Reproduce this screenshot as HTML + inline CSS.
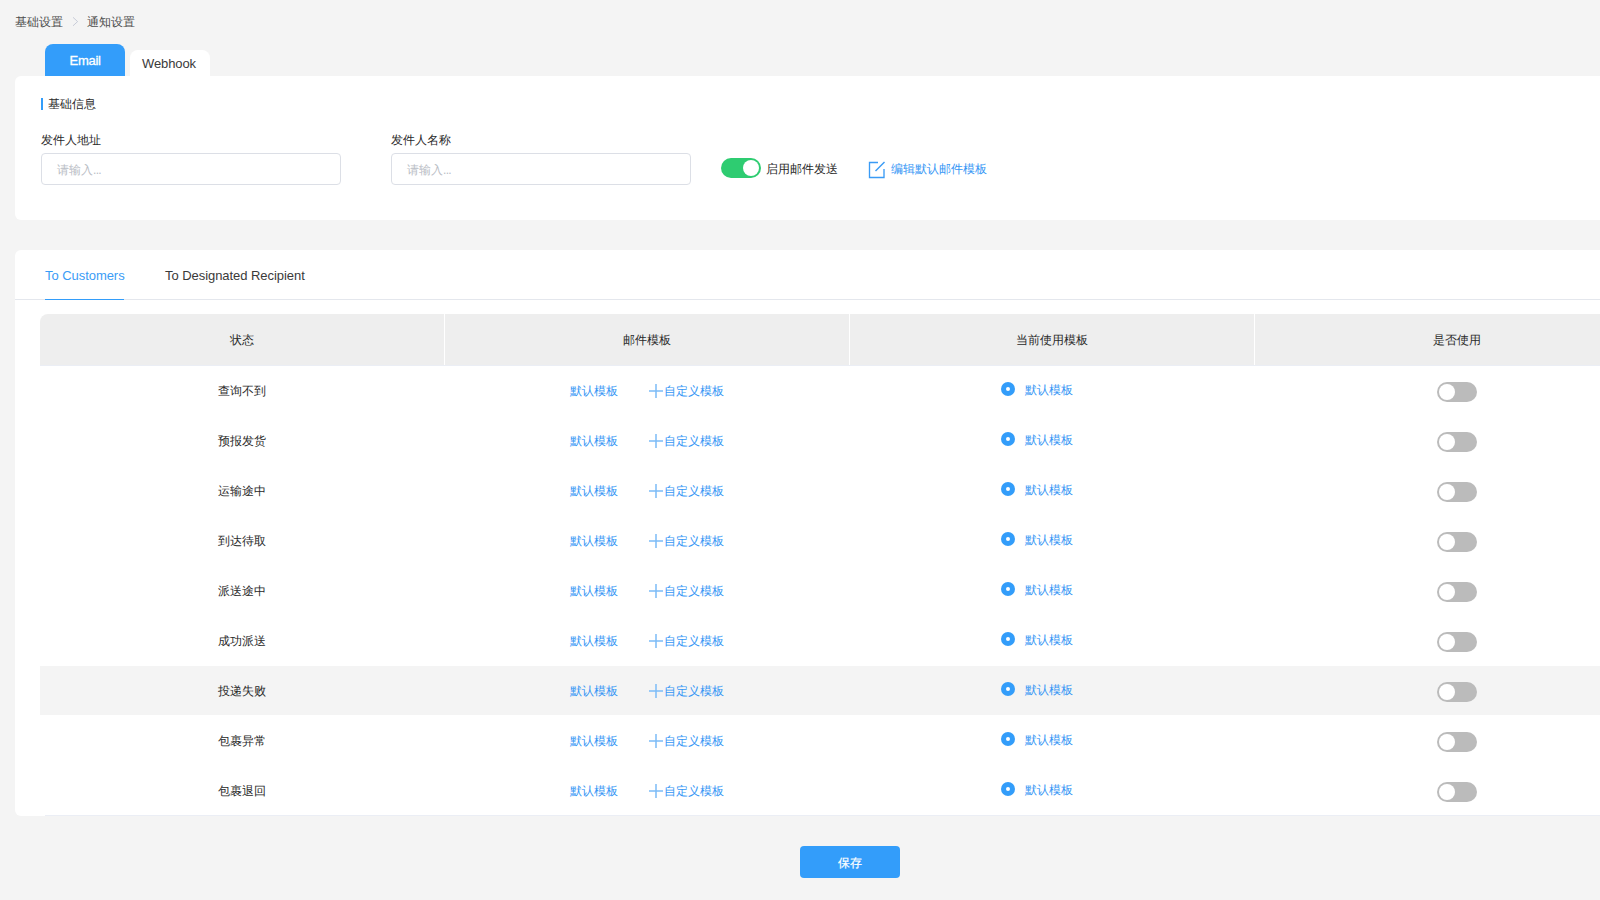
<!DOCTYPE html>
<html><head><meta charset="utf-8">
<style>
*{box-sizing:border-box;margin:0;padding:0}
html,body{width:1600px;height:900px;overflow:hidden;background:#f4f4f4;font-family:"Liberation Sans",sans-serif;color:#2a2a2a;font-size:12px}
.abs{position:absolute}
.t{position:absolute;white-space:nowrap;line-height:1}
.blue{color:#3596f5}
.crumb{color:#4d4d4d}
.tab-email{left:45px;top:44px;width:80px;height:32px;background:#339dfa;border-radius:8px 8px 0 0}
.tab-web{left:130px;top:50px;width:80px;height:26px;background:#fff;border-radius:8px 8px 0 0}
.card1{left:15px;top:76px;width:1700px;height:144px;background:#fff;border-radius:6px}
.card2{left:15px;top:250px;width:1700px;height:566px;background:#fff;border-radius:6px}
.bar{left:41px;top:98px;width:2px;height:12px;background:#339dfa}
.inp{height:32px;width:300px;top:153px;border:1px solid #dcdfe6;border-radius:4px;background:#fff}
.ph{color:#b9bdc5}
.sw{width:40px;height:20px;border-radius:10px}
.sw .k{position:absolute;top:2px;width:16px;height:16px;border-radius:50%;background:#fff}
.tline{left:15px;top:299px;width:1700px;height:1px;background:#e4e7ed}
.uline{left:45px;top:299px;width:79px;height:1px;background:#339dfa}
.thead{left:40px;top:314px;width:1620px;height:52px;background:#eeeeee;border-radius:8px 0 0 0;border-bottom:1px solid #ebeef5}
.vdiv{top:314px;width:1px;height:51px;background:#fff}
.hover{left:40px;top:666px;width:1620px;height:49px;background:#f4f4f4}
.bline{left:45px;top:815px;width:1620px;height:1px;background:#ebeef5}
.radio{width:14px;height:14px;border-radius:50%;background:#339dfa}
.radio::after{content:"";position:absolute;left:5px;top:5px;width:4px;height:4px;border-radius:50%;background:#fff}
.btn{left:800px;top:846px;width:100px;height:32px;background:#339dfa;border-radius:4px}
</style></head><body>
<div class="t crumb" style="left:15px;top:16px;font-size:12px">基础设置</div>
<svg class="abs" style="left:71px;top:16px" width="9" height="11" viewBox="0 0 9 11"><path d="M2 1.3 L6.6 5.6 L2 9.8" fill="none" stroke="#bcc2d0" stroke-width="0.8"/></svg>
<div class="t crumb" style="left:87px;top:16px;font-size:12px">通知设置</div>

<div class="abs tab-email"></div>
<div class="t" style="left:69.5px;top:54px;font-size:13px;color:#fff;letter-spacing:-0.25px;-webkit-text-stroke:0.3px #fff">Email</div>
<div class="abs tab-web"></div>
<div class="t" style="left:142px;top:57px;font-size:13px;color:#3a3a3a;letter-spacing:-0.1px">Webhook</div>

<div class="abs card1"></div>
<div class="abs bar"></div>
<div class="t" style="left:48px;top:98px">基础信息</div>
<div class="t" style="left:41px;top:134px">发件人地址</div>
<div class="abs inp" style="left:41px"></div>
<div class="t ph" style="left:57px;top:164px">请输入<span style="letter-spacing:-0.7px">...</span></div>
<div class="t" style="left:391px;top:134px">发件人名称</div>
<div class="abs inp" style="left:391px"></div>
<div class="t ph" style="left:407px;top:164px">请输入<span style="letter-spacing:-0.7px">...</span></div>

<div class="abs sw" style="left:721px;top:158px;background:#2ecc71"><div class="k" style="left:22px"></div></div>
<div class="t" style="left:766px;top:163px">启用邮件发送</div>
<svg class="abs" style="left:867px;top:160px" width="20" height="20" viewBox="0 0 20 20"><path d="M11 2.5 H2.5 V17.5 H17 V9" fill="none" stroke="#3a9bf5" stroke-width="1.35"/><path d="M8.5 11 L17.5 2" fill="none" stroke="#3a9bf5" stroke-width="1.35"/></svg>
<div class="t blue" style="left:891px;top:163px">编辑默认邮件模板</div>

<div class="abs card2"></div>
<div class="t blue" style="left:45px;top:269px;font-size:13px;color:#3a9cf6;letter-spacing:-0.05px">To Customers</div>
<div class="t" style="left:165px;top:269px;font-size:13px;color:#3a3a3a;letter-spacing:-0.05px">To Designated Recipient</div>
<div class="abs tline"></div>
<div class="abs uline"></div>

<div class="abs thead"></div>
<div class="abs vdiv" style="left:444px"></div>
<div class="abs vdiv" style="left:849px"></div>
<div class="abs vdiv" style="left:1254px"></div>
<div class="t" style="left:230px;top:334px">状态</div>
<div class="t" style="left:623px;top:334px">邮件模板</div>
<div class="t" style="left:1016px;top:334px">当前使用模板</div>
<div class="t" style="left:1433px;top:334px">是否使用</div>

<div class="abs hover"></div>
<div class="abs bline"></div>
<div class="t" style="left:218px;top:385px">查询不到</div>
<div class="t blue" style="left:570px;top:385px">默认模板</div>
<svg class="abs" style="left:648px;top:383px" width="16" height="16" viewBox="0 0 16 16"><path d="M1 8 H15 M8 1 V15" fill="none" stroke="#7cbcf7" stroke-width="1.5"/></svg>
<div class="t blue" style="left:664px;top:385px">自定义模板</div>
<div class="abs radio" style="left:1001px;top:382px"></div>
<div class="t blue" style="left:1025px;top:384px">默认模板</div>
<div class="abs sw" style="left:1437px;top:382px;background:#bbb"><div class="k" style="left:2px"></div></div>
<div class="t" style="left:218px;top:435px">预报发货</div>
<div class="t blue" style="left:570px;top:435px">默认模板</div>
<svg class="abs" style="left:648px;top:433px" width="16" height="16" viewBox="0 0 16 16"><path d="M1 8 H15 M8 1 V15" fill="none" stroke="#7cbcf7" stroke-width="1.5"/></svg>
<div class="t blue" style="left:664px;top:435px">自定义模板</div>
<div class="abs radio" style="left:1001px;top:432px"></div>
<div class="t blue" style="left:1025px;top:434px">默认模板</div>
<div class="abs sw" style="left:1437px;top:432px;background:#bbb"><div class="k" style="left:2px"></div></div>
<div class="t" style="left:218px;top:485px">运输途中</div>
<div class="t blue" style="left:570px;top:485px">默认模板</div>
<svg class="abs" style="left:648px;top:483px" width="16" height="16" viewBox="0 0 16 16"><path d="M1 8 H15 M8 1 V15" fill="none" stroke="#7cbcf7" stroke-width="1.5"/></svg>
<div class="t blue" style="left:664px;top:485px">自定义模板</div>
<div class="abs radio" style="left:1001px;top:482px"></div>
<div class="t blue" style="left:1025px;top:484px">默认模板</div>
<div class="abs sw" style="left:1437px;top:482px;background:#bbb"><div class="k" style="left:2px"></div></div>
<div class="t" style="left:218px;top:535px">到达待取</div>
<div class="t blue" style="left:570px;top:535px">默认模板</div>
<svg class="abs" style="left:648px;top:533px" width="16" height="16" viewBox="0 0 16 16"><path d="M1 8 H15 M8 1 V15" fill="none" stroke="#7cbcf7" stroke-width="1.5"/></svg>
<div class="t blue" style="left:664px;top:535px">自定义模板</div>
<div class="abs radio" style="left:1001px;top:532px"></div>
<div class="t blue" style="left:1025px;top:534px">默认模板</div>
<div class="abs sw" style="left:1437px;top:532px;background:#bbb"><div class="k" style="left:2px"></div></div>
<div class="t" style="left:218px;top:585px">派送途中</div>
<div class="t blue" style="left:570px;top:585px">默认模板</div>
<svg class="abs" style="left:648px;top:583px" width="16" height="16" viewBox="0 0 16 16"><path d="M1 8 H15 M8 1 V15" fill="none" stroke="#7cbcf7" stroke-width="1.5"/></svg>
<div class="t blue" style="left:664px;top:585px">自定义模板</div>
<div class="abs radio" style="left:1001px;top:582px"></div>
<div class="t blue" style="left:1025px;top:584px">默认模板</div>
<div class="abs sw" style="left:1437px;top:582px;background:#bbb"><div class="k" style="left:2px"></div></div>
<div class="t" style="left:218px;top:635px">成功派送</div>
<div class="t blue" style="left:570px;top:635px">默认模板</div>
<svg class="abs" style="left:648px;top:633px" width="16" height="16" viewBox="0 0 16 16"><path d="M1 8 H15 M8 1 V15" fill="none" stroke="#7cbcf7" stroke-width="1.5"/></svg>
<div class="t blue" style="left:664px;top:635px">自定义模板</div>
<div class="abs radio" style="left:1001px;top:632px"></div>
<div class="t blue" style="left:1025px;top:634px">默认模板</div>
<div class="abs sw" style="left:1437px;top:632px;background:#bbb"><div class="k" style="left:2px"></div></div>
<div class="t" style="left:218px;top:685px">投递失败</div>
<div class="t blue" style="left:570px;top:685px">默认模板</div>
<svg class="abs" style="left:648px;top:683px" width="16" height="16" viewBox="0 0 16 16"><path d="M1 8 H15 M8 1 V15" fill="none" stroke="#7cbcf7" stroke-width="1.5"/></svg>
<div class="t blue" style="left:664px;top:685px">自定义模板</div>
<div class="abs radio" style="left:1001px;top:682px"></div>
<div class="t blue" style="left:1025px;top:684px">默认模板</div>
<div class="abs sw" style="left:1437px;top:682px;background:#bbb"><div class="k" style="left:2px"></div></div>
<div class="t" style="left:218px;top:735px">包裹异常</div>
<div class="t blue" style="left:570px;top:735px">默认模板</div>
<svg class="abs" style="left:648px;top:733px" width="16" height="16" viewBox="0 0 16 16"><path d="M1 8 H15 M8 1 V15" fill="none" stroke="#7cbcf7" stroke-width="1.5"/></svg>
<div class="t blue" style="left:664px;top:735px">自定义模板</div>
<div class="abs radio" style="left:1001px;top:732px"></div>
<div class="t blue" style="left:1025px;top:734px">默认模板</div>
<div class="abs sw" style="left:1437px;top:732px;background:#bbb"><div class="k" style="left:2px"></div></div>
<div class="t" style="left:218px;top:785px">包裹退回</div>
<div class="t blue" style="left:570px;top:785px">默认模板</div>
<svg class="abs" style="left:648px;top:783px" width="16" height="16" viewBox="0 0 16 16"><path d="M1 8 H15 M8 1 V15" fill="none" stroke="#7cbcf7" stroke-width="1.5"/></svg>
<div class="t blue" style="left:664px;top:785px">自定义模板</div>
<div class="abs radio" style="left:1001px;top:782px"></div>
<div class="t blue" style="left:1025px;top:784px">默认模板</div>
<div class="abs sw" style="left:1437px;top:782px;background:#bbb"><div class="k" style="left:2px"></div></div>

<div class="abs btn"></div>
<div class="t" style="left:838px;top:857px;color:#fff;-webkit-text-stroke:0.2px #fff">保存</div>

</body></html>
